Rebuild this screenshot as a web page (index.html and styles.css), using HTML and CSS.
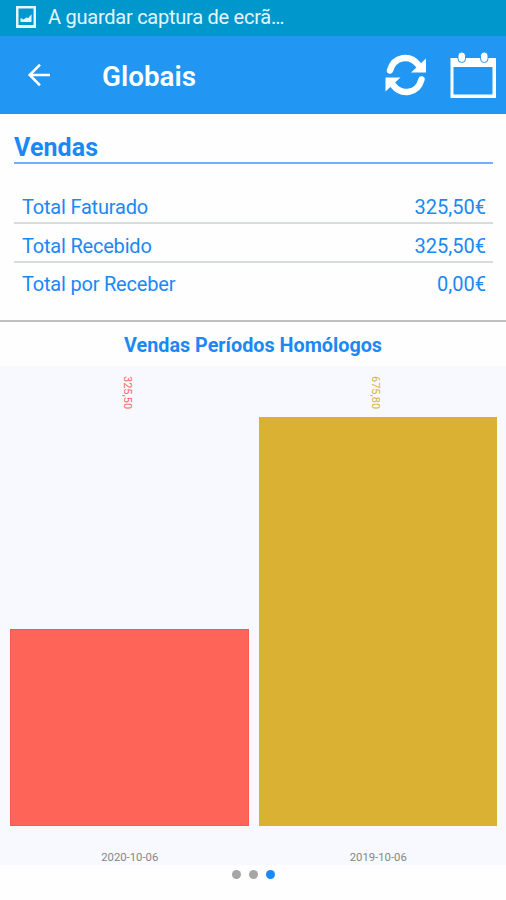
FILE: index.html
```
<!DOCTYPE html>
<html lang="pt">
<head>
    <meta charset="UTF-8">
    <meta name="viewport" content="width=device-width, initial-scale=1.0">
    <title>Globais</title>
    <link rel="stylesheet" href="styles.css">
</head>
<body>
    <div class="status-bar">
        <svg class="status-icon" width="20" height="22" viewBox="0 0 20 22">
            <path fill="#e4f6fb" fill-rule="evenodd" d="M0 0h20v22H0zM2.500 2.500v16.500h15V2.500z"/>
            <path fill="#e4f6fb" d="M4.500 16v-4l3 1.500 3-2 2 .5 3-4v8z"/>
        </svg>
        <span class="status-text">A guardar captura de ecrã…</span>
    </div>
    <header class="toolbar">
        <svg class="back" width="24" height="24" viewBox="0 0 24 24">
            <path d="M23 12H3M13 1.700L2.700 12 13 22.300" fill="none" stroke="#fff" stroke-width="2.600"/>
        </svg>
        <h1>Globais</h1>
        <svg class="refresh" width="42" height="42" viewBox="0 0 42 42">
            <path d="M5 16.500C9 2 25 0 33.500 11" fill="none" stroke="#fff" stroke-width="6.500" stroke-linecap="round"/>
            <path d="M41 4.500V18.500H26z" fill="#fff"/>
            <path d="M36.500 25.500C32.500 40 16.500 42 8 31" fill="none" stroke="#fff" stroke-width="6.500" stroke-linecap="round"/>
            <path d="M0.500 37.500V23.500H15.500z" fill="#fff"/>
        </svg>
        <svg class="calendar" width="46" height="46" viewBox="0 0 46 46">
            <path fill="#fff" fill-rule="evenodd" d="M.5 6h45.500v40H.5zM3.500 15V42.500h39V15z"/>
            <rect x="8" y="0" width="7.500" height="10.500" rx="3.700" fill="#fff" stroke="#2196f3"/>
            <rect x="30.500" y="0" width="7.500" height="10.500" rx="3.700" fill="#fff" stroke="#2196f3"/>
        </svg>
    </header>
    <main>
        <section class="summary">
            <h2>Vendas</h2>
            <div class="row"><span class="label">Total Faturado</span><span>325,50€</span></div>
            <div class="row"><span class="label">Total Recebido</span><span>325,50€</span></div>
            <div class="row"><span class="label">Total por Receber</span><span>0,00€</span></div>
        </section>
        <h3 class="chart-title">Vendas Períodos Homólogos</h3>
        <section class="chart">
            <div class="column red">
                <span class="value">325,50</span>
                <div class="track"><div class="bar" style="height: 197px"></div></div>
                <span class="date">2020-10-06</span>
            </div>
            <div class="column gold">
                <span class="value">675,80</span>
                <div class="track"><div class="bar" style="height: 409px"></div></div>
                <span class="date">2019-10-06</span>
            </div>
        </section>
        <div class="dots">
            <span class="dot"></span>
            <span class="dot"></span>
            <span class="dot active"></span>
        </div>
    </main>
</body>
</html>
```

FILE: styles.css
```
* {
    box-sizing: border-box;
}
body {
    margin: 0;
    height: 900px;
    overflow: hidden;
    background: #fefefe;
    color: #1a88f5;
    font-family: Roboto, sans-serif;
}
h1, h2, h3 {
    margin: 0;
}
.status-bar {
    display: flex;
    align-items: center;
    height: 36px;
    padding: 0 0 2px 16px;
    background: #0097cc;
    color: #e4f6fb;
}
.status-text {
    margin-left: 12px;
    font-size: 20px;
    letter-spacing: -0.25px;
}
.toolbar {
    display: flex;
    align-items: center;
    height: 78px;
    padding: 0 10px 0 27px;
    background: #2196f3;
    color: #fff;
}
.toolbar h1 {
    flex: 1;
    margin: 3px 0 0 51px;
    font-size: 27.800px;
    font-weight: 600;
}
.refresh {
    margin-right: 23px;
}
.summary {
    height: 208px;
    padding: 18px 13px 0 14px;
    border-bottom: 2px solid #c0c0c0;
}
.summary h2 {
    height: 32px;
    margin-bottom: 21px;
    border-bottom: 2px solid #75aefa;
    font-size: 25px;
    font-weight: 700;
    letter-spacing: 0.1px;
    line-height: 31px;
}
.row {
    display: flex;
    justify-content: space-between;
    height: 39px;
    padding: 5px 7px 0 8px;
    border-bottom: 2px solid #d9ddd9;
    font-size: 20px;
    line-height: 34px;
}
.row:last-child {
    border-bottom: none;
    line-height: 32px;
}
.label {
    letter-spacing: -0.2px;
}
.chart-title {
    height: 44px;
    font-size: 19.800px;
    font-weight: 700;
    line-height: 48px;
    text-align: center;
}
.chart {
    display: flex;
    gap: 10px;
    height: 499px;
    padding: 10px 9px 0 10px;
    background: #f8f9fe;
}
.column {
    display: flex;
    flex: 1;
    flex-direction: column;
    align-items: center;
}
.value {
    height: 34px;
    margin-right: 4px;
    font-size: 11px;
    line-height: 13px;
    writing-mode: vertical-rl;
}
.track {
    display: flex;
    align-items: flex-end;
    width: 100%;
    height: 416px;
}
.bar {
    width: 100%;
}
.red .value {
    color: #ff6459;
}
.red .bar {
    background: #ff6459;
    border: 1px solid #fb5850;
}
.gold .value {
    color: #dbb133;
}
.gold .bar {
    background: #dbb133;
}
.date {
    margin: 25px 0 0 1px;
    color: #858585;
    font-size: 11.300px;
    line-height: 14px;
}
.dots {
    display: flex;
    justify-content: center;
    gap: 8px;
    padding-top: 5px;
}
.dot {
    width: 9px;
    height: 9px;
    border-radius: 50%;
    background: #a5a5a5;
}
.dot.active {
    background: #1a88f5;
}
```
